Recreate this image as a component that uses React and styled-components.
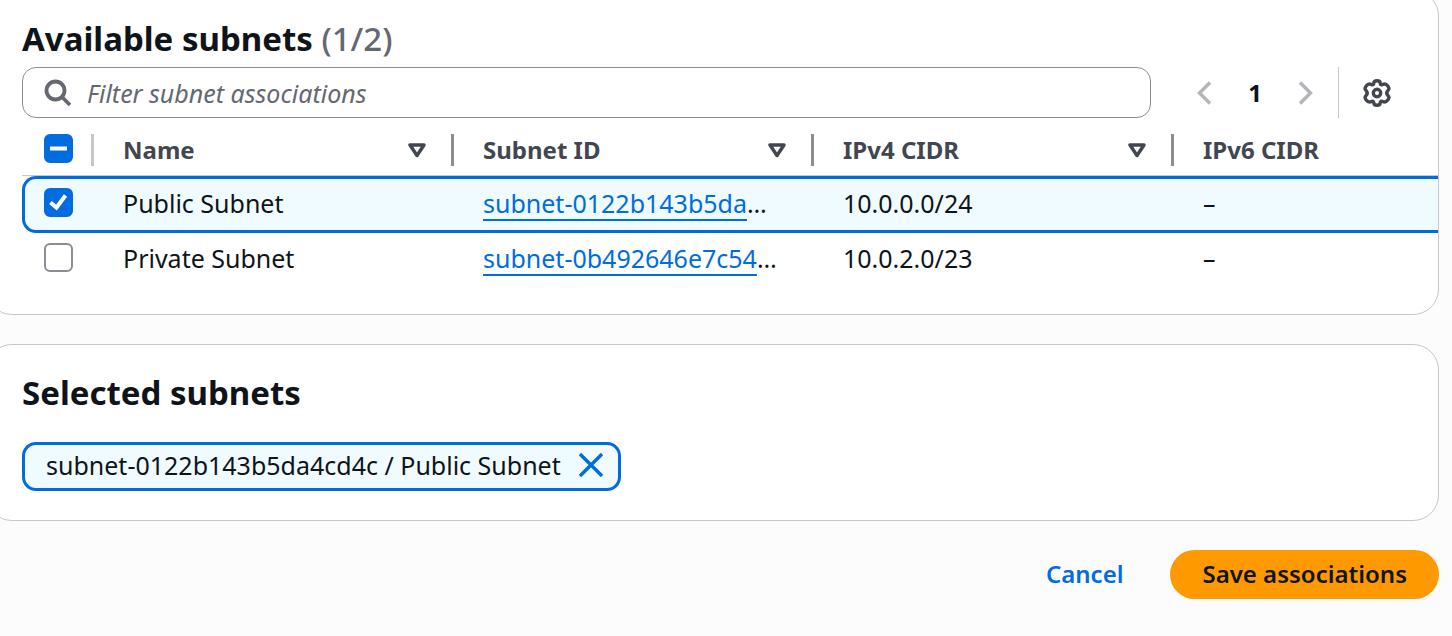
import React, { useEffect, useRef, useState } from "react";
import styled, { createGlobalStyle } from "styled-components";

const SUBNETS = [
  {
    id: "subnet-0122b143b5da4cd4c",
    label: "subnet-0122b143b5da",
    name: "Public Subnet",
    ipv4: "10.0.0.0/24",
    ipv6: "–",
  },
  {
    id: "subnet-0b492646e7c54",
    label: "subnet-0b492646e7c54",
    name: "Private Subnet",
    ipv4: "10.0.2.0/23",
    ipv6: "–",
  },
];

const COLUMNS = [
  { key: "name", title: "Name", sortable: true },
  { key: "id", title: "Subnet ID", sortable: true },
  { key: "ipv4", title: "IPv4 CIDR", sortable: true },
  { key: "ipv6", title: "IPv6 CIDR", sortable: false },
];

const Checkbox = ({ label, checked, indeterminate = false, onChange }) => {
  const ref = useRef(null);

  useEffect(() => {
    ref.current.indeterminate = indeterminate;
  }, [indeterminate]);

  return (
    <CheckboxLabel>
      <CheckboxInput
        ref={ref}
        type="checkbox"
        aria-label={label}
        checked={checked}
        onChange={onChange}
      />
      {indeterminate && (
        <CheckboxMark viewBox="0 0 29 29" aria-hidden="true">
          <path d="M6 14.5h17" strokeWidth="4" />
        </CheckboxMark>
      )}
      {checked && !indeterminate && (
        <CheckboxMark viewBox="0 0 29 29" aria-hidden="true">
          <path d="M6.5 14.5l6 5L21.5 7.5" strokeWidth="4" />
        </CheckboxMark>
      )}
    </CheckboxLabel>
  );
};

export default function App() {
  const [selected, setSelected] = useState([SUBNETS[0].id]);
  const [filter, setFilter] = useState("");

  const toggle = (id) =>
    setSelected((ids) =>
      ids.includes(id) ? ids.filter((i) => i !== id) : [...ids, id]
    );

  const all = selected.length === SUBNETS.length;
  const some = selected.length > 0 && !all;
  const rows = SUBNETS.filter((s) =>
    `${s.id} ${s.name}`.toLowerCase().includes(filter.toLowerCase())
  );

  return (
    <Page>
      <GlobalStyle />
      <Content>
        <Card>
          <Title>
            Available subnets{" "}
            <Counter>
              ({selected.length}/{SUBNETS.length})
            </Counter>
          </Title>

          <Toolbar>
            <SearchBox>
              <SearchIcon viewBox="0 0 28 28" aria-hidden="true">
                <circle cx="11.5" cy="11.5" r="9" />
                <path d="M18 18l8 8" />
              </SearchIcon>
              <SearchInput
                type="text"
                aria-label="Filter subnet associations"
                placeholder="Filter subnet associations"
                value={filter}
                onChange={(e) => setFilter(e.target.value)}
              />
            </SearchBox>
            <Pagination aria-label="Pagination">
              <PageArrow type="button" aria-label="Previous page" disabled>
                <svg width="14" height="24" viewBox="0 0 14 24">
                  <path d="M13 1.500L2.500 12l10.500 10.500" />
                </svg>
              </PageArrow>
              <PageNumber type="button" aria-current="page">
                1
              </PageNumber>
              <PageArrow type="button" aria-label="Next page" disabled>
                <svg width="14" height="24" viewBox="0 0 14 24">
                  <path d="M1 1.500L11.500 12 1 22.500" />
                </svg>
              </PageArrow>
            </Pagination>
            <Preferences>
              <IconButton type="button" aria-label="Preferences">
                <svg width="28" height="28" viewBox="0 0 28 28">
                  <path d="M10.800 4.200Q10.800 1.700 14 1.700Q17.200 1.700 17.200 4.200Q17.200 6.300 19.500 5.600Q22.500 4 24.800 7Q27 10 25 11.300Q22.500 14 25 16.700Q27 18 24.800 21Q22.500 24 19.500 22.400Q17.200 21.700 17.200 23.800Q17.200 26.300 14 26.300Q10.800 26.300 10.800 23.800Q10.800 21.700 8.500 22.400Q5.500 24 3.200 21Q1 18 3 16.700Q5.500 14 3 11.300Q1 10 3.200 7Q5.500 4 8.500 5.600Q10.800 6.300 10.800 4.200Z" />
                  <circle cx="14" cy="14" r="3.7" />
                </svg>
              </IconButton>
            </Preferences>
          </Toolbar>

          <TableWrapper>
            <Table>
              <colgroup>
                <SelectCol />
                <DataCol />
                <DataCol />
                <DataCol />
                <col />
              </colgroup>
              <thead>
                <tr>
                  <HeaderCell>
                    <HeaderInner $selection>
                      <Checkbox
                        label="Select all subnets"
                        checked={all}
                        indeterminate={some}
                        onChange={() =>
                          setSelected(all ? [] : SUBNETS.map((s) => s.id))
                        }
                      />
                    </HeaderInner>
                  </HeaderCell>
                  {COLUMNS.map((col) => (
                    <HeaderCell key={col.key} scope="col">
                      <HeaderInner $resizable={col.sortable}>
                        {col.title}
                        {col.sortable && (
                          <SortButton
                            type="button"
                            aria-label={`Sort by ${col.title}`}
                          >
                            <svg width="18" height="15" viewBox="0 0 18 15">
                              <path d="M2 2h14L9 12.500z" />
                            </svg>
                          </SortButton>
                        )}
                      </HeaderInner>
                    </HeaderCell>
                  ))}
                </tr>
              </thead>
              <tbody>
                {rows.map((s) => (
                  <Row key={s.id} $selected={selected.includes(s.id)}>
                    <SelectCell>
                      <Checkbox
                        label={`Select ${s.name}`}
                        checked={selected.includes(s.id)}
                        onChange={() => toggle(s.id)}
                      />
                    </SelectCell>
                    <Cell>{s.name}</Cell>
                    <Cell>
                      <SubnetLink href={`#${s.id}`}>{s.label}</SubnetLink>…
                    </Cell>
                    <Cell>{s.ipv4}</Cell>
                    <Cell>{s.ipv6}</Cell>
                  </Row>
                ))}
              </tbody>
            </Table>
          </TableWrapper>
        </Card>

        <Card>
          <Title>Selected subnets</Title>
          <Tokens>
            {SUBNETS.filter((s) => selected.includes(s.id)).map((s) => (
              <Token key={s.id}>
                {s.id} / {s.name}
                <DismissButton
                  type="button"
                  aria-label={`Remove ${s.name}`}
                  onClick={() => toggle(s.id)}
                >
                  <svg width="24" height="24" viewBox="0 0 24 24">
                    <path d="M1 1l22 22M23 1L1 23" />
                  </svg>
                </DismissButton>
              </Token>
            ))}
          </Tokens>
        </Card>

        <Actions>
          <LinkButton type="button">Cancel</LinkButton>
          <PrimaryButton type="button">Save associations</PrimaryButton>
        </Actions>
      </Content>
    </Page>
  );
}

const GlobalStyle = createGlobalStyle`
  *, *::before, *::after {
    box-sizing: border-box;
  }

  body {
    margin: 0;
    background-color: #fcfcfd;
    color: #0f141a;
    font-family: "Noto Sans", "Open Sans", sans-serif;
    font-size: 25px;
    line-height: 32px;
  }

  button, input {
    font-family: inherit;
  }
`;

const Page = styled.main`
  min-height: 100vh;
  overflow: hidden;
`;

const Content = styled.div`
  display: flex;
  flex-direction: column;
  gap: 29px;
  margin: -10px 13px 0 -14px;
`;

const Card = styled.section`
  padding: 28px 35px 29px;
  border: 1px solid #c6c6cd;
  border-radius: 26px;
  background-color: #ffffff;
`;

const Title = styled.h2`
  margin: 0;
  font-size: 33px;
  line-height: 40px;
  font-weight: 700;
`;

const Counter = styled.span`
  font-weight: 500;
  color: #656871;
`;

const Toolbar = styled.div`
  display: flex;
  align-items: center;
  margin-top: 8px;
`;

const SearchBox = styled.label`
  flex: 1;
  display: flex;
  align-items: center;
  gap: 15px;
  height: 51px;
  padding: 0 21px;
  border: 1px solid #8c8c94;
  border-radius: 14px;
`;

const SearchIcon = styled.svg`
  width: 28px;
  height: 28px;
  fill: none;
  stroke: #656871;
  stroke-width: 3.8;
`;

const SearchInput = styled.input`
  flex: 1;
  min-width: 0;
  padding: 0;
  border: 0;
  outline: 0;
  background: transparent;
  color: #0f141a;
  font-size: 25px;
  line-height: 32px;

  &::placeholder {
    color: #656871;
    font-style: italic;
    opacity: 1;
  }
`;

const Pagination = styled.nav`
  display: flex;
  align-items: center;
  gap: 34px;
  margin-left: 46px;
`;

const IconButton = styled.button`
  display: flex;
  padding: 0;
  border: 0;
  background: transparent;
  cursor: pointer;

  svg {
    fill: none;
    stroke: #424650;
    stroke-width: 3.4;
  }
`;

const PageArrow = styled(IconButton)`
  svg {
    stroke: #b4b4bb;
  }
`;

const PageNumber = styled.button`
  width: 20px;
  padding: 0;
  border: 0;
  background: transparent;
  color: #0f141a;
  font-size: 24px;
  line-height: 32px;
  font-weight: 700;
`;

const Preferences = styled.div`
  display: flex;
  align-items: center;
  height: 51px;
  margin-left: 25px;
  padding: 0 12px 0 24px;
  border-left: 1px solid #c6c6cd;
`;

const TableWrapper = styled.div`
  margin-right: -35px;
  padding-top: 16px;
  overflow: hidden;
`;

const Table = styled.table`
  width: 100%;
  table-layout: fixed;
  border-collapse: separate;
  border-spacing: 0;
`;

const SelectCol = styled.col`
  width: 72px;
`;

const DataCol = styled.col`
  width: 360px;
`;

const HeaderCell = styled.th`
  padding: 0 0 9px;
  border-bottom: 1px solid #c6c6cd;
  text-align: left;
`;

const HeaderInner = styled.div`
  display: flex;
  align-items: ${(p) => (p.$selection ? "flex-start" : "center")};
  justify-content: space-between;
  height: 32px;
  padding-left: ${(p) => (p.$selection ? "22px" : "29px")};
  padding-right: 25px;
  border-right: ${(p) => {
    if (p.$selection) return "3px solid #c6c6cd";
    return p.$resizable ? "3px solid #8c8c94" : "0";
  }};
  color: #424650;
  font-size: 24px;
  line-height: 32px;
  font-weight: 700;
`;

const SortButton = styled(IconButton)`
  svg {
    stroke-linejoin: round;
  }
`;

const Cell = styled.td`
  padding: 8px 29px 11px;
  vertical-align: top;
  white-space: nowrap;
`;

const SelectCell = styled(Cell)`
  padding: 9px 22px 11px;
`;

// The selection outline takes its space from the row's own borders.
const Row = styled.tr`
  ${Cell} {
    border: 0 solid #006ce0;
    border-width: ${(p) => (p.$selected ? "3px 0" : "0")};
    padding-top: ${(p) => (p.$selected ? "8px" : "9px")};
    background-color: ${(p) => (p.$selected ? "#f0fbff" : "transparent")};
  }

  ${SelectCell} {
    border-left-width: ${(p) => (p.$selected ? "3px" : "0")};
    border-radius: 14px 0 0 14px;
    padding-top: ${(p) => (p.$selected ? "9px" : "10px")};
    padding-left: ${(p) => (p.$selected ? "19px" : "22px")};
  }
`;

const CheckboxLabel = styled.label`
  display: grid;
  width: 29px;
  height: 29px;

  > * {
    grid-area: 1 / 1;
  }
`;

const CheckboxInput = styled.input`
  appearance: none;
  width: 29px;
  height: 29px;
  margin: 0;
  border: 2px solid #8c8c94;
  border-radius: 6px;
  background-color: #ffffff;

  &:checked,
  &:indeterminate {
    border-color: #006ce0;
    background-color: #006ce0;
  }
`;

const CheckboxMark = styled.svg`
  width: 29px;
  height: 29px;
  fill: none;
  stroke: #ffffff;
  pointer-events: none;
`;

const SubnetLink = styled.a`
  color: #006ce0;
  text-decoration: underline;
  text-decoration-thickness: 2px;
  text-underline-offset: 6px;
  text-decoration-skip-ink: none;
`;

const Tokens = styled.div`
  display: flex;
  flex-wrap: wrap;
  gap: 16px;
  margin-top: 29px;
`;

const Token = styled.div`
  display: flex;
  align-items: center;
  gap: 18px;
  height: 49px;
  padding: 0 15px 3px 21px;
  border: 3px solid #006ce0;
  border-radius: 14px;
  background-color: #f0fbff;
`;

const DismissButton = styled(IconButton)`
  svg {
    stroke: #006ce0;
  }
`;

const Actions = styled.div`
  display: flex;
  justify-content: flex-end;
  align-items: center;
  gap: 15px;
`;

const LinkButton = styled.button`
  height: 49px;
  padding: 0 32px 2px;
  border: 0;
  border-radius: 25px;
  background: transparent;
  color: #006ce0;
  font-size: 24px;
  line-height: 32px;
  font-weight: 600;
  cursor: pointer;
`;

const PrimaryButton = styled(LinkButton)`
  background-color: #ff9900;
  color: #0f141a;
`;
